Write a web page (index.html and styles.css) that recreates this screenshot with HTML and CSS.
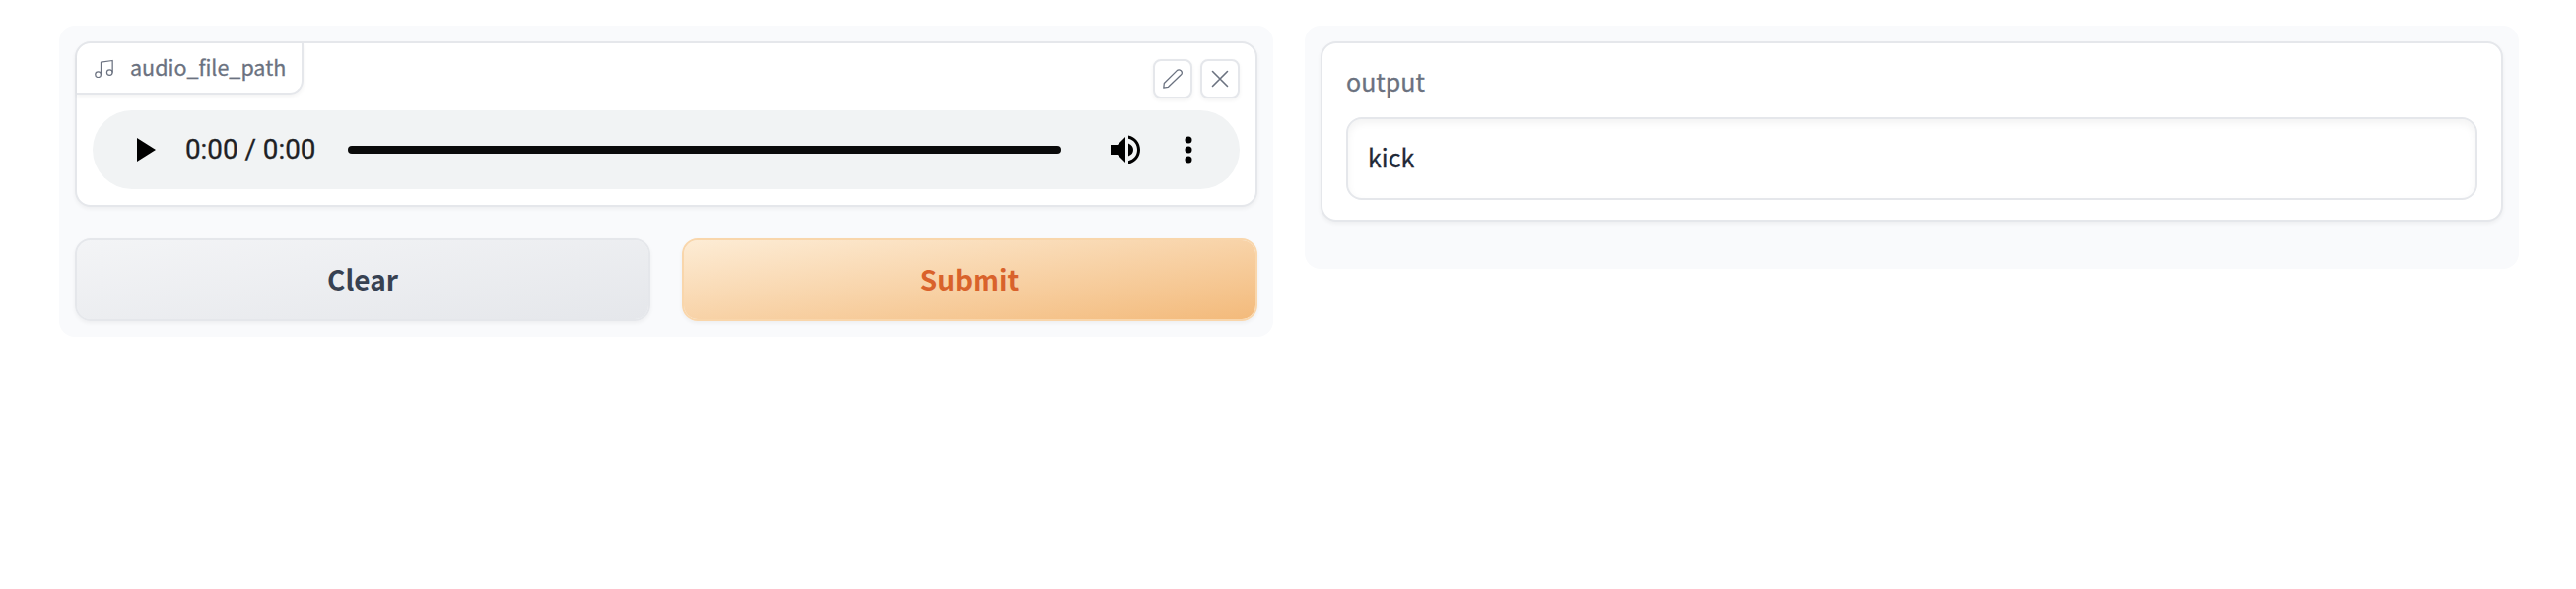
FILE: index.html
```html
<!DOCTYPE html>
<html lang="en">
<head>
<meta charset="utf-8">
<title>Audio classifier</title>
<link rel="stylesheet" href="styles.css">
</head>
<body>
<main class="columns">
  <section class="panel">
    <div class="card audio-card">
      <div class="card-head">
        <div class="tag">
          <svg class="tag-icon" viewBox="0 0 24 24" fill="none" stroke="currentColor" stroke-width="1.5" stroke-linecap="round" stroke-linejoin="round"><path d="M9 20V5l14-2v14"/><circle cx="5.500" cy="20" r="3.400"/><circle cx="19.500" cy="17.500" r="3.400"/></svg>
          <span class="tag-text">audio_file_path</span>
        </div>
        <div class="tools">
          <button class="tool" aria-label="Edit"><svg viewBox="0 0 20 20" fill="none" stroke="currentColor" stroke-width="1.300" stroke-linejoin="round"><path d="M.8 19.200 1.300 14.500 14.300 1.600C16.800-.6 21.200 3 18.500 5.800L5.500 18.300Z"/></svg></button>
          <button class="tool" aria-label="Remove"><svg viewBox="0 0 20 20" fill="none" stroke="currentColor" stroke-width="1.600" stroke-linecap="round"><path d="M2.500 2.500 17.500 17.500M17.500 2.500 2.500 17.500"/></svg></button>
        </div>
      </div>
      <div class="player">
        <svg class="play" viewBox="0 0 19 24"><path d="M0 0V24L19 12Z"/></svg>
        <span class="time">0:00 / 0:00</span>
        <div class="track"></div>
        <svg class="volume" viewBox="0 0 30 30"><path d="M0 10V20H7L15 28V2L7 10ZM18 8.500V21.500Q23 19.500 23 15T18 8.500ZM18 .5V3.800C23.500 5 27 9.500 27 15S23.500 25 18 26.200V29.500C25.500 28 30 22 30 15S25.500 2 18 .5Z"/></svg>
        <svg class="more" viewBox="0 0 8 28"><circle cx="4" cy="4" r="3.500"/><circle cx="4" cy="14" r="3.500"/><circle cx="4" cy="24" r="3.500"/></svg>
      </div>
    </div>
    <div class="actions">
      <button class="btn secondary"><span>Clear</span></button>
      <button class="btn primary"><span>Submit</span></button>
    </div>
  </section>
  <section class="panel output-panel">
    <div class="card output-card">
      <span class="field-label">output</span>
      <div class="field"><span>kick</span></div>
    </div>
  </section>
</main>
</body>
</html>
```
FILE: styles.css
```css
* { box-sizing: border-box; }
body { margin: 0; background: #fff; font-family: "Noto Sans CJK SC", "Noto Sans", sans-serif; }
button { font: inherit; margin: 0; padding: 0; }
svg { display: block; }
.columns { display: grid; grid-template-columns: 1232px 1232px; gap: 32px; align-items: start; padding: 26px 60px; }
.panel { background: #f9fafc; border-radius: 16px; padding: 16px; }
.card { background: #fff; border: 2px solid #e5e7eb; border-radius: 16px; box-shadow: 0 2px 4px rgba(0,0,0,.05); }
.audio-card { height: 168px; }
.card-head { display: flex; justify-content: space-between; height: 68px; }
.tag { display: flex; align-items: center; width: 230px; height: 52px; padding-left: 17px; gap: 17px; border: solid #e5e7eb; border-width: 0 2px 2px 0; border-radius: 14px 0 14px 0; box-shadow: 0 2px 4px rgba(0,0,0,.05); color: #6b7280; }
.tag-icon { width: 20px; height: 20px; }
.tag-text { padding-bottom: 2px; font-size: 21.500px; line-height: 30px; white-space: nowrap; -webkit-text-stroke: .3px; }
.tools { display: flex; gap: 8px; padding: 16px 16px 0 0; }
.tool { display: grid; place-items: center; width: 40px; height: 40px; border: 2px solid #e5e7eb; border-radius: 8px; background: #fff; color: #6b7280; box-shadow: 0 2px 4px rgba(0,0,0,.05); }
.tool svg { width: 20px; height: 20px; }
.player { display: flex; align-items: center; height: 80px; margin: 0 16px; padding: 0 48px 0 45px; border-radius: 40px; background: #f1f3f4; }
.play { width: 19px; height: 24px; }
.time { width: 134px; margin-left: 30px; font: 27.800px/40px Roboto, sans-serif; color: #202124; white-space: nowrap; -webkit-text-stroke: .3px; }
.track { flex: 1; height: 8px; margin: 0 50px 0 31px; border-radius: 4px; background: #0a0a0a; }
.volume { width: 30px; height: 30px; }
.more { width: 8px; height: 28px; margin-left: 45px; }
.actions { display: grid; grid-template-columns: 1fr 1fr; gap: 32px; margin-top: 32px; }
.btn { height: 84px; padding-bottom: 2px; border: 2px solid; border-radius: 16px; font-size: 28px; font-weight: 700; line-height: 40px; box-shadow: 0 2px 4px rgba(0,0,0,.05); }
.secondary { border-color: #e5e7eb; background: linear-gradient(to bottom right, #f3f4f6, #e5e7eb) padding-box; color: #374151; }
.primary { border-color: #f9d6ab; background: linear-gradient(to bottom right, #fdecd5, #f3ba7b) padding-box; color: #d9622b; }
.output-panel { height: 247px; }
.output-card { height: 183px; padding: 18px 24px; }
.field-label { display: block; height: 57px; font-size: 25px; line-height: 40px; color: #6b7280; -webkit-text-stroke: .3px; }
.field { display: flex; align-items: center; height: 84px; padding: 0 20px 4px; border: 2px solid #e5e7eb; border-radius: 16px; box-shadow: inset 0 4px 8px rgba(0,0,0,.05); font-size: 25px; color: #1f2937; -webkit-text-stroke: .3px; }
```
